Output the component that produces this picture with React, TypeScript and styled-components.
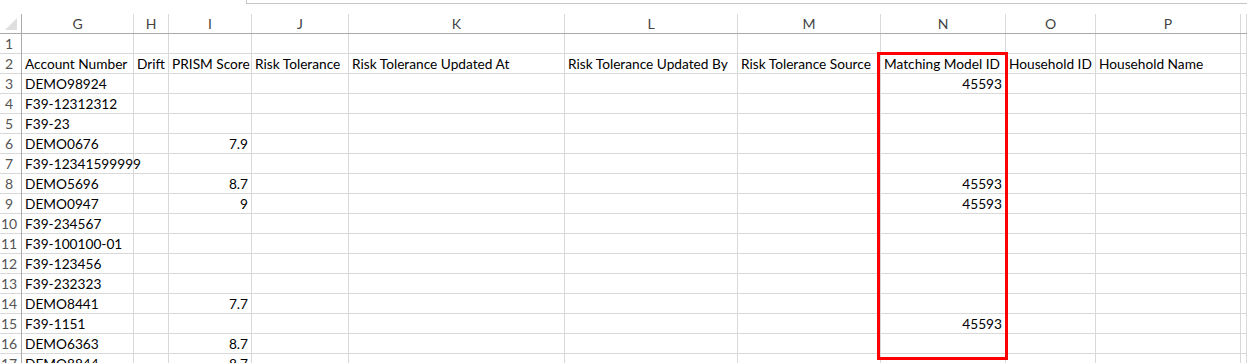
import React from 'react';
import styled, { createGlobalStyle } from 'styled-components';

const GlobalStyle = createGlobalStyle`
	html, body {
		margin: 0;
		padding: 0;
		background: #ffffff;
	}
	body {
		font-family: Lato, "Liberation Sans", sans-serif;
		overflow: hidden;
	}
`;

const COLS = '22px 112px 35px 83px 97px 216px 173px 143px 125px 90px 145px 1fr';

const Page = styled.div`
	position: relative;
	width: 1247px;
	height: 363px;
	overflow: hidden;
`;

const TopStrip = styled.div`
	display: flex;
	height: 14px;
`;

const FormulaBox = styled.div`
	margin-left: 246px;
	flex: 1;
	height: 3px;
	border-left: 1px solid #c6c6c6;
	border-bottom: 1px solid #c6c6c6;
`;

const Row = styled.div<{ $head?: boolean }>`
	display: grid;
	grid-template-columns: ${COLS};
	height: 20px;
	border-bottom: 1px solid ${p => (p.$head ? '#ababab' : '#d8d8d8')};
	box-sizing: border-box;
`;

const ColHead = styled.div`
	border-right: 1px solid #dadada;
	color: #444;
	font-size: 14px;
	line-height: 19px;
	text-align: center;
`;

const Corner = styled.div`
	position: relative;
	border-right: 1px solid #ababab;
	&::after {
		content: '';
		position: absolute;
		right: 4px;
		bottom: 3px;
		width: 0;
		height: 0;
		border-left: 12px solid transparent;
		border-bottom: 12px solid #dfdfdf;
	}
`;

const RowHead = styled.div`
	border-right: 1px solid #ababab;
	color: #555;
	font-size: 14px;
	line-height: 20px;
	text-align: center;
	padding-right: 3px;
`;

const Cell = styled.div<{ $num?: boolean }>`
	border-right: 1px solid #d8d8d8;
	color: #000;
	font-size: 13.7px;
	line-height: 20px;
	white-space: nowrap;
	overflow: visible;
	padding: 0 ${p => (p.$num ? '3px' : '0')} 0 ${p => (p.$num ? '0' : '3px')};
	text-align: ${p => (p.$num ? 'right' : 'left')};
	position: relative;
	z-index: 1;
`;

const Highlight = styled.div`
	position: absolute;
	left: 877px;
	top: 52px;
	width: 131px;
	height: 308px;
	border: 3px solid #ff0000;
	box-sizing: border-box;
	z-index: 2;
`;

const letters = ['G', 'H', 'I', 'J', 'K', 'L', 'M', 'N', 'O', 'P', ''];

const headers = [
	'Account Number', 'Drift', 'PRISM Score', 'Risk Tolerance', 'Risk Tolerance Updated At',
	'Risk Tolerance Updated By', 'Risk Tolerance Source', 'Matching Model ID', 'Household ID', 'Household Name', '',
];

// account, prism score, matching model id
const data: [string, string, string][] = [
	['DEMO98924', '', '45593'],
	['F39-12312312', '', ''],
	['F39-23', '', ''],
	['DEMO0676', '7.9', ''],
	['F39-12341599999', '', ''],
	['DEMO5696', '8.7', '45593'],
	['DEMO0947', '9', '45593'],
	['F39-234567', '', ''],
	['F39-100100-01', '', ''],
	['F39-123456', '', ''],
	['F39-232323', '', ''],
	['DEMO8441', '7.7', ''],
	['F39-1151', '', '45593'],
	['DEMO6363', '8.7', ''],
	['DEMO8844', '8.7', ''],
];

function DataRow({ n, acct, score, model }: { n: number; acct: string; score: string; model: string }) {
	return (
		<Row>
			<RowHead>{n}</RowHead>
			<Cell>{acct}</Cell>
			<Cell />
			<Cell $num>{score}</Cell>
			<Cell />
			<Cell />
			<Cell />
			<Cell />
			<Cell $num>{model}</Cell>
			<Cell />
			<Cell />
			<Cell />
		</Row>
	);
}

export default function App() {
	return (
		<Page>
			<GlobalStyle />
			<TopStrip>
				<FormulaBox />
			</TopStrip>
			<Row $head>
				<Corner />
				{letters.map((l, i) => <ColHead key={i}>{l}</ColHead>)}
			</Row>
			<Row>
				<RowHead>1</RowHead>
				{headers.map((_, i) => <Cell key={i} />)}
			</Row>
			<Row>
				<RowHead>2</RowHead>
				{headers.map((h, i) => <Cell key={i}>{h}</Cell>)}
			</Row>
			{data.map((d, i) => (
				<DataRow key={i} n={i + 3} acct={d[0]} score={d[1]} model={d[2]} />
			))}
			<Highlight />
		</Page>
	);
}
